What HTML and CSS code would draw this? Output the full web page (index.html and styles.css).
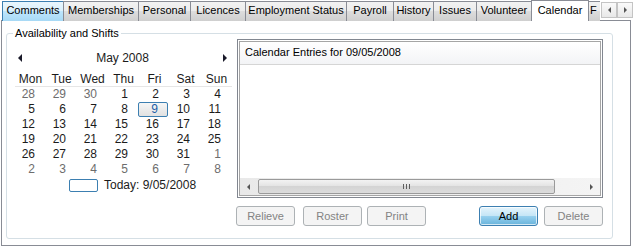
FILE: index.html
```html
<!DOCTYPE html>
<html>
<head>
    <meta charset="UTF-8">
    <title>Calendar</title>
    <link rel="stylesheet" href="styles.css">
</head>
<body>

<div class="tabs">
    <div class="tab-strip">
        <div class="tab hot" style="width:62px">Comments</div>
        <div class="tab" style="width:76px">Memberships</div>
        <div class="tab" style="width:53px">Personal</div>
        <div class="tab" style="width:56px">Licences</div>
        <div class="tab" style="width:102px">Employment Status</div>
        <div class="tab" style="width:48px">Payroll</div>
        <div class="tab" style="width:41px">History</div>
        <div class="tab" style="width:44px">Issues</div>
        <div class="tab" style="width:56px">Volunteer</div>
        <div class="tab active" style="width:58px">Calendar</div>
        <div class="tab clipped" style="width:30px">F</div>
    </div>
    <div class="tab-scroll">
        <span class="sbtn"><i class="tri left small"></i></span>
        <span class="sbtn"><i class="tri right small"></i></span>
    </div>
</div>

<div class="panel">
    <div class="group">
        <span class="legend">Availability and Shifts</span>

        <div class="cal">
            <div class="cal-title">
                <i class="tri left"></i>
                <span>May 2008</span>
                <i class="tri right"></i>
            </div>
            <div class="cal-grid">
                <div class="dow">Mon</div><div class="dow">Tue</div><div class="dow">Wed</div><div class="dow">Thu</div><div class="dow">Fri</div><div class="dow">Sat</div><div class="dow">Sun</div>

                <div class="day other">28</div><div class="day other">29</div><div class="day other">30</div><div class="day">1</div><div class="day">2</div><div class="day">3</div><div class="day">4</div>
                <div class="day">5</div><div class="day">6</div><div class="day">7</div><div class="day">8</div><div class="day sel">9</div><div class="day">10</div><div class="day">11</div>
                <div class="day">12</div><div class="day">13</div><div class="day">14</div><div class="day">15</div><div class="day">16</div><div class="day">17</div><div class="day">18</div>
                <div class="day">19</div><div class="day">20</div><div class="day">21</div><div class="day">22</div><div class="day">23</div><div class="day">24</div><div class="day">25</div>
                <div class="day">26</div><div class="day">27</div><div class="day">28</div><div class="day">29</div><div class="day">30</div><div class="day">31</div><div class="day other">1</div>
                <div class="day other">2</div><div class="day other">3</div><div class="day other">4</div><div class="day other">5</div><div class="day other">6</div><div class="day other">7</div><div class="day other">8</div>
            </div>
            <div class="today">
                <span class="today-box"></span>
                <span>Today: 9/05/2008</span>
            </div>
        </div>

        <div class="entries">
            <div class="list">
                <div class="list-inner">
                    <div class="list-head">Calendar Entries for 09/05/2008</div>
                    <div class="list-body"></div>
                    <div class="hscroll">
                        <span class="arrow"><i class="tri left small"></i></span>
                        <span class="thumb"><span class="grip"></span></span>
                        <span class="track"></span>
                        <span class="arrow"><i class="tri right small"></i></span>
                    </div>
                </div>
            </div>
            <div class="buttons">
                <button class="btn" disabled>Relieve</button>
                <button class="btn gap8" disabled>Roster</button>
                <button class="btn gap5" disabled>Print</button>
                <button class="btn default gap53">Add</button>
                <button class="btn gap6" disabled>Delete</button>
            </div>
        </div>
    </div>
</div>

</body>
</html>
```

FILE: styles.css
```css
body {
    margin: 0;
    width: 633px;
    height: 247px;
    background-color: #ffffff;
    font-family: "Liberation Sans", Arial, sans-serif;
    font-size: 11px;
    color: #000000;
    overflow: hidden;
}

/* Tab strip */
.tabs {
    display: flex;
    height: 20px;
    padding-left: 2px;
    position: relative;
    z-index: 2;
}

.tab-strip {
    display: flex;
    align-items: flex-end;
    width: 598px;
    overflow: hidden;
    height: 21px;
}

.tab {
    box-sizing: border-box;
    flex: none;
    height: 20px;
    margin-right: -1px;
    border: 1px solid #898c95;
    border-bottom: none;
    background: linear-gradient(#f2f2f2, #ebebeb 50%, #dddddd 50%, #cfcfcf);
    text-align: center;
    line-height: 17px;
    white-space: nowrap;
}

.tab.hot {
    border-color: #3c7fb1;
    background: linear-gradient(#eaf6fd, #d9f0fc 50%, #bee6fd 50%, #a7d9f5);
}

.tab.active {
    height: 21px;
    background: #ffffff;
    position: relative;
    z-index: 1;
    line-height: 18px;
}

.tab.clipped {
    text-align: left;
    padding-left: 1px;
}

.tab-scroll {
    display: flex;
    padding-top: 2px;
    padding-left: 1px;
}

.sbtn {
    box-sizing: border-box;
    width: 16px;
    height: 16px;
    border: 1px solid #c4c4c4;
    background: linear-gradient(#fafafa, #e8e8e8);
    display: flex;
    align-items: center;
    justify-content: center;
}

/* Triangles */
.tri {
    display: inline-block;
    width: 0;
    height: 0;
    border-top: 4px solid transparent;
    border-bottom: 4px solid transparent;
}

.tri.left {
    border-right: 4px solid #1a1a2a;
}

.tri.right {
    border-left: 4px solid #1a1a2a;
}

.tri.small {
    border-top-width: 3px;
    border-bottom-width: 3px;
}

.tri.small.left {
    border-right: 3px solid #555555;
}

.tri.small.right {
    border-left: 3px solid #555555;
}

/* Panel */
.panel {
    box-sizing: border-box;
    width: 630px;
    height: 226px;
    margin-left: 1px;
    border: 1px solid #898c95;
    padding: 12px 0 0 4px;
}

.group {
    box-sizing: border-box;
    width: 607px;
    height: 206px;
    border: 1px solid #d5dfe5;
    border-radius: 3px;
    position: relative;
    display: flex;
}

.legend {
    position: absolute;
    top: -8px;
    left: 6px;
    padding: 0 2px;
    background: #ffffff;
    line-height: 14px;
}

/* Calendar */
.cal {
    width: 230px;
    flex: none;
    padding: 16px 0 0 8px;
    box-sizing: border-box;
    font-size: 12px;
    color: #1b1b1b;
}

.cal-title {
    display: flex;
    align-items: center;
    justify-content: space-between;
    width: 212px;
    height: 15px;
    padding-left: 3px;
    box-sizing: border-box;
}

.cal-grid {
    display: grid;
    grid-template-columns: repeat(7, 31px);
    grid-auto-rows: 15px;
    margin-top: 7px;
}

.dow {
    height: 14px;
    line-height: 14px;
    text-align: center;
    border-bottom: 1px solid #e6e6e6;
}

.day {
    text-align: right;
    padding-right: 11px;
    line-height: 15px;
}

.day.other {
    color: #6d6d6d;
}

.day.sel {
    box-sizing: border-box;
    margin-left: -1px;
    margin-right: 2px;
    padding-right: 9px;
    border: 1px solid #3c7fb1;
    border-radius: 2px;
    background: linear-gradient(#f6f6f6, #e1e1e1);
    color: #1d5fa8;
    line-height: 13px;
}

.today {
    display: flex;
    align-items: center;
    height: 16px;
    padding-left: 54px;
}

.today-box {
    box-sizing: border-box;
    width: 29px;
    height: 13px;
    border: 1px solid #3c7fb1;
    border-radius: 2px;
    margin-right: 6px;
}

/* Entries list */
.entries {
    padding-top: 5px;
}

.list {
    box-sizing: border-box;
    width: 366px;
    height: 159px;
    border: 1px solid #828790;
    padding: 1px;
}

.list-inner {
    box-sizing: border-box;
    height: 100%;
    border: 1px solid #a5a5a5;
    display: flex;
    flex-direction: column;
}

.list-head {
    height: 22px;
    line-height: 21px;
    padding-left: 5px;
    border-bottom: 1px solid #d5d5d5;
    background: linear-gradient(#ffffff, #f3f4f6);
}

.list-body {
    flex: 1;
}

.hscroll {
    display: flex;
    height: 17px;
    background: linear-gradient(90deg, #e9e9e9, #f4f4f4);
}

.hscroll .arrow {
    width: 17px;
    display: flex;
    align-items: center;
    justify-content: center;
}

.thumb {
    box-sizing: border-box;
    width: 297px;
    margin: 1px 0 1px 1px;
    border: 1px solid #9a9a9a;
    border-radius: 2px;
    background: linear-gradient(#f3f3f3, #e2e2e2 50%, #d4d4d4 50%, #dcdcdc);
    display: flex;
    align-items: center;
    justify-content: center;
}

.grip {
    width: 7px;
    height: 5px;
    background: repeating-linear-gradient(90deg, #5e5e5e 0 1px, transparent 1px 3px);
}

.track {
    flex: 1;
}

/* Buttons */
.buttons {
    display: flex;
    margin-top: 8px;
    margin-left: -1px;
}

.btn {
    box-sizing: border-box;
    width: 59px;
    height: 20px;
    font-family: "Liberation Sans", Arial, sans-serif;
    font-size: 11px;
    padding: 0;
    border: 1px solid #adb2b5;
    border-radius: 3px;
    background: #f4f4f4;
    color: #838383;
}

.btn.default {
    color: #000000;
    border-color: #3c7fb1;
    background: linear-gradient(#e5f4fc, #c4e5f6 50%, #98d1ef 50%, #68b3db);
    box-shadow: inset 0 0 0 1px rgba(255, 255, 255, 0.7);
}

.gap8 {
    margin-left: 8px;
}

.gap5 {
    margin-left: 5px;
}

.gap53 {
    margin-left: 53px;
}

.gap6 {
    margin-left: 6px;
}
```
